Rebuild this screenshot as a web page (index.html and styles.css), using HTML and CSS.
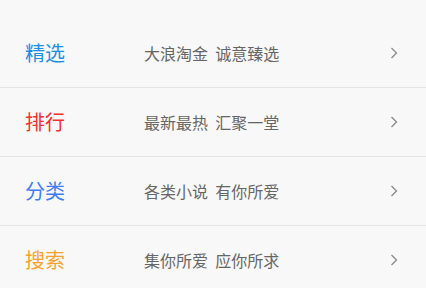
FILE: index.html
```html
<!DOCTYPE html>
<html lang="zh-CN">
<head>
<meta charset="utf-8">
<title>导航</title>
<link rel="stylesheet" href="styles.css">
</head>
<body>
<ul class="menu">
  <li class="row">
    <span class="title blue">精选</span>
    <span class="desc">大浪淘金&nbsp;&nbsp;诚意臻选</span>
    <svg class="chev" viewBox="0 0 8 12" width="8" height="12"><path d="M1.5 1 L6.5 6 L1.5 11" fill="none" stroke="#8a8a8a" stroke-width="1.3"/></svg>
  </li>
  <li class="row">
    <span class="title red">排行</span>
    <span class="desc">最新最热&nbsp;&nbsp;汇聚一堂</span>
    <svg class="chev" viewBox="0 0 8 12" width="8" height="12"><path d="M1.5 1 L6.5 6 L1.5 11" fill="none" stroke="#8a8a8a" stroke-width="1.3"/></svg>
  </li>
  <li class="row">
    <span class="title indigo">分类</span>
    <span class="desc">各类小说&nbsp;&nbsp;有你所爱</span>
    <svg class="chev" viewBox="0 0 8 12" width="8" height="12"><path d="M1.5 1 L6.5 6 L1.5 11" fill="none" stroke="#8a8a8a" stroke-width="1.3"/></svg>
  </li>
  <li class="row">
    <span class="title orange">搜索</span>
    <span class="desc">集你所爱&nbsp;&nbsp;应你所求</span>
    <svg class="chev" viewBox="0 0 8 12" width="8" height="12"><path d="M1.5 1 L6.5 6 L1.5 11" fill="none" stroke="#8a8a8a" stroke-width="1.3"/></svg>
  </li>
</ul>
</body>
</html>
```
FILE: styles.css
```css
html, body {
  margin: 0;
  padding: 0;
  background: #f8f8f8;
  font-family: "Noto Sans CJK SC", "Noto Sans", sans-serif;
}
.menu {
  list-style: none;
  margin: 0;
  padding: 19px 0 0 0;
}
.row {
  display: flex;
  align-items: center;
  height: 68px;
  border-bottom: 1px solid #e4e4e4;
  padding: 0 28px 0 25px;
}
.title {
  width: 119px;
  font-size: 20px;
  line-height: 1;
}
.desc {
  flex: 1;
  font-size: 16px;
  color: #666;
  line-height: 1;
}
.chev {
  display: block;
}
.blue { color: #1a8fe8; }
.red { color: #f52d2d; }
.indigo { color: #3f7cf6; }
.orange { color: #f9a12a; }
```
